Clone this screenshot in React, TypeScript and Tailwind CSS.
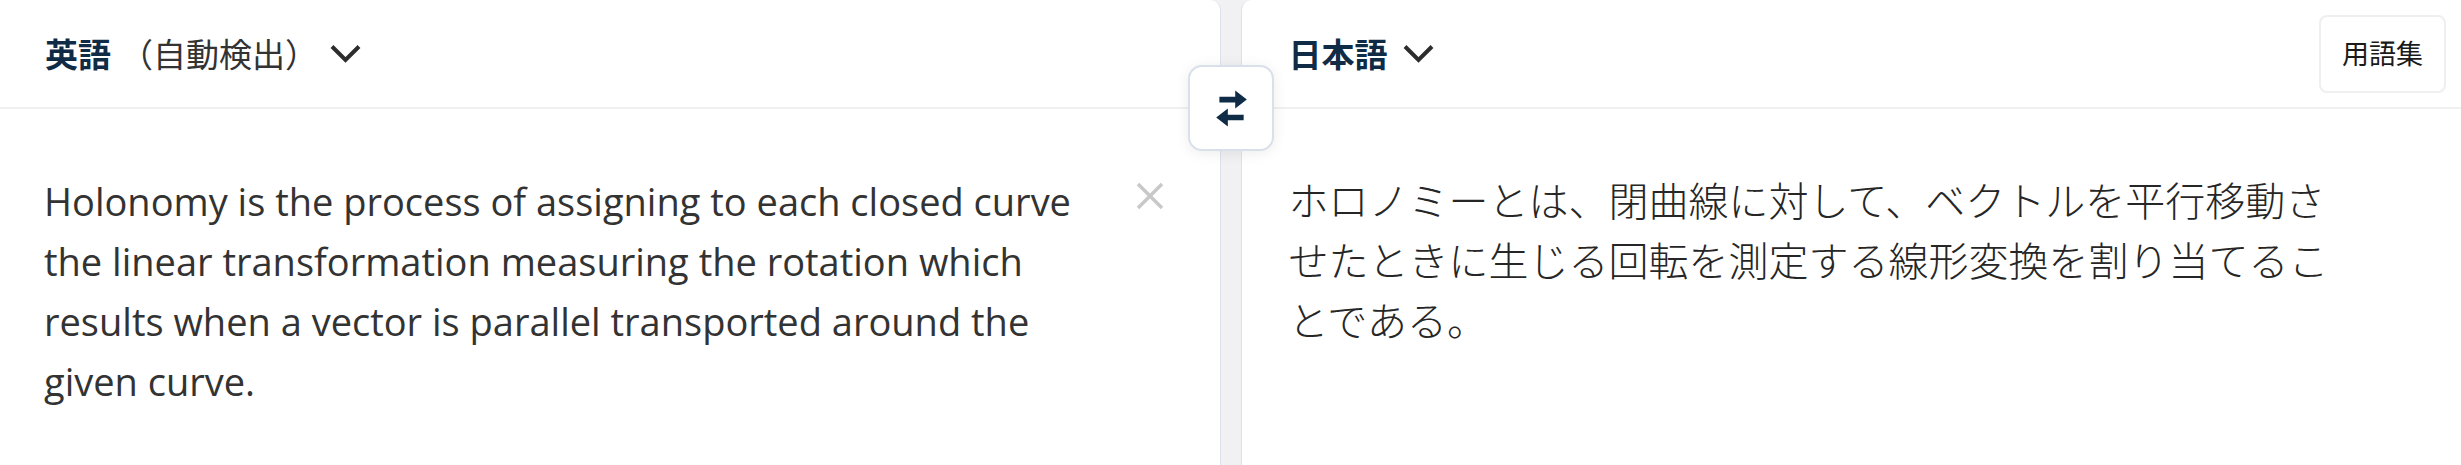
const sourceLines = [
  "Holonomy is the process of assigning to each closed curve",
  "the linear transformation measuring the rotation which",
  "results when a vector is parallel transported around the",
  "given curve.",
];

const targetLines = [
  "ホロノミーとは、閉曲線に対して、ベクトルを平行移動さ",
  "せたときに生じる回転を測定する線形変換を割り当てるこ",
  "とである。",
];

const jp = "font-['Noto_Sans_CJK_JP','Noto_Sans',sans-serif]";

function Chevron() {
  return (
    <svg width="31" height="19" viewBox="0 0 31 19" className="shrink-0">
      <path d="M2 2.5 L15.5 16 L29 2.5" fill="none" stroke="#2d2d2d" strokeWidth="4" />
    </svg>
  );
}

function SwapIcon() {
  return (
    <svg width="34" height="38" viewBox="0 0 32 36">
      <path d="M5 7.3 H20 V1.5 L31 10 L20 18.5 V12.7 H5 Z" fill="#0f2b46" />
      <path d="M28 24.3 H13 V18.5 L2 27 L13 35.5 V29.7 H28 Z" fill="#0f2b46" />
    </svg>
  );
}

export default function App() {
  return (
    <div className="relative flex h-[465px] w-full gap-[20px] overflow-hidden bg-[#f1f1f3]">
      {/* source panel */}
      <div className="flex flex-1 flex-col rounded-tr-[10px] border-r border-[#dbe2ec] bg-white">
        <div className="flex h-[109px] items-center border-b-2 border-[#f0f0f0] px-[45px]">
          <span className={`${jp} text-[33px] font-bold text-[#0f2b46]`}>英語</span>
          <span className={`${jp} ml-[9px] text-[33px] text-[#333333]`}>（自動検出）</span>
          <span className="ml-[12px]">
            <Chevron />
          </span>
        </div>
        <div className="flex pl-[44px] pr-[56px] pt-[62px]">
          <div className="flex-1 font-['Open_Sans',sans-serif] text-[38px] leading-[60px] text-[#333333]">
            {sourceLines.map((l) => (
              <div key={l} className="whitespace-nowrap">
                {l}
              </div>
            ))}
          </div>
          <svg width="28" height="28" viewBox="0 0 28 28" className="mt-[11px] shrink-0">
            <path d="M2 2 L26 26 M26 2 L2 26" stroke="#c8c8c8" strokeWidth="3.5" />
          </svg>
        </div>
      </div>

      {/* target panel */}
      <div className="flex flex-1 flex-col rounded-tl-[10px] border-l border-[#dbe2ec] bg-white">
        <div className="flex h-[109px] items-center justify-between border-b-2 border-[#f0f0f0] pl-[47px] pr-[15px]">
          <div className="flex items-center">
            <span className={`${jp} text-[33px] font-bold text-[#0f2b46]`}>日本語</span>
            <span className="ml-[15px]">
              <Chevron />
            </span>
          </div>
          <button
            className={`${jp} flex h-[78px] w-[127px] items-center justify-center rounded-[8px] border-2 border-[#efefef] bg-white text-[27px] text-[#1a1a1a]`}
          >
            用語集
          </button>
        </div>
        <div className={`${jp} pl-[47px] pt-[60px] text-[40px] font-light leading-[60px] text-[#262626]`}>
          {targetLines.map((l) => (
            <div key={l} className="whitespace-nowrap">
              {l}
            </div>
          ))}
        </div>
      </div>

      {/* swap button */}
      <button className="absolute left-1/2 top-[65px] flex h-[86px] w-[86px] -translate-x-1/2 items-center justify-center rounded-[14px] border-2 border-[#d9e0ea] bg-white shadow-[0_2px_14px_rgba(0,0,0,0.08)]">
        <SwapIcon />
      </button>
    </div>
  );
}
